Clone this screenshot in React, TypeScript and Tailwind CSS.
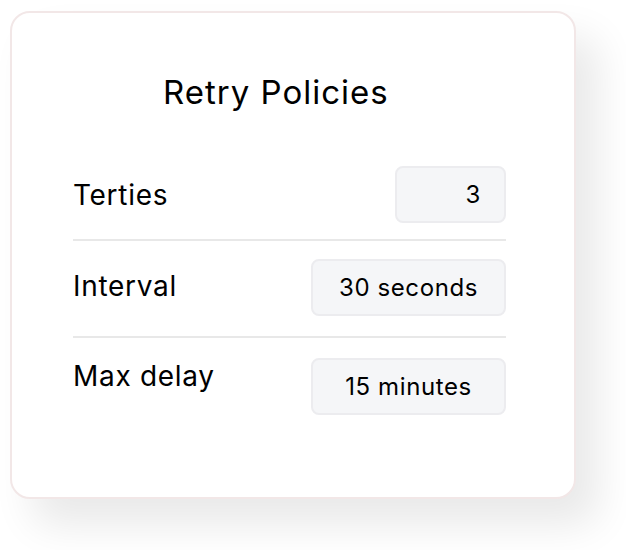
const rows = [
  { label: 'Terties', value: '3', box: 'w-[111px] justify-end pr-[23px]', labelPad: 'pb-0', gap: 'mt-0' },
  { label: 'Interval', value: '30 seconds', box: 'w-[195px] justify-center', labelPad: 'pb-[4px]', gap: 'mt-[16px]' },
  { label: 'Max delay', value: '15 minutes', box: 'w-[195px] justify-center', labelPad: 'pb-[22px]', gap: 'mt-[20px]' },
];

export default function App() {
  return (
    <div className="h-[550px] w-[626px] bg-white pl-[10px] pt-[11px] font-['Inter',sans-serif] text-black">
      <div className="flex h-[488px] w-[566px] flex-col rounded-[20px] border-2 border-[#f2e7e7] bg-white shadow-[22px_26px_40px_rgba(0,0,0,0.09)]">
        <h1 className="pl-[151px] pt-[59px] text-[33px] leading-[40px] font-normal tracking-[1px]">Retry Policies</h1>
        <div className="mt-[54px] flex flex-col pl-[61px] pr-[68px]">
          {rows.map((r, i) => (
            <div key={r.label} className={r.gap}>
              {i > 0 && <div className={`h-[2px] bg-[#e8e8e8] ${i === 1 ? 'mb-[18px]' : 'mb-[20px]'}`} />}
              <div className="flex items-center justify-between">
                <span className={`${r.labelPad} text-[28px] leading-[34px] tracking-[0.7px]`}>{r.label}</span>
                <div className={`flex h-[57px] items-center rounded-[8px] border-2 border-[#ececef] bg-[#f5f6f8] text-[24px] tracking-[0.6px] ${r.box}`}>
                  {r.value}
                </div>
              </div>
            </div>
          ))}
        </div>
      </div>
    </div>
  );
}
